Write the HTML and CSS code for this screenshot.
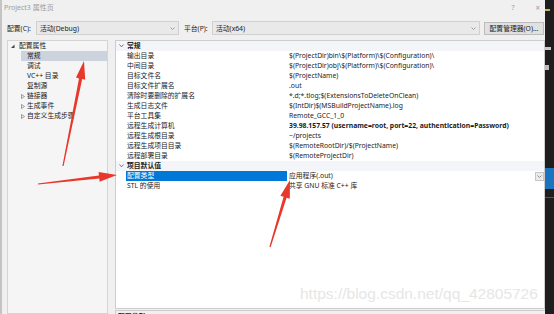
FILE: index.html
```html
<!DOCTYPE html>
<html lang="zh-CN">
<head>
  <meta charset="UTF-8">
  <title>Project3 属性页</title>
  <link rel="stylesheet" href="styles.css">
</head>
<body>
  <div class="screen">
    <!-- 属性页窗口 -->
    <div class="window">
      <div class="titlebar">
        <span class="title">Project3 属性页</span>
        <span class="tb-help">?</span>
        <span class="tb-close">×</span>
      </div>

      <div class="toolbar">
        <span class="label label-config">配置(C):</span>
        <div class="combo combo-config">
          <span>活动(Debug)</span>
          <svg class="chev" width="5" height="3" viewBox="0 0 5 3"><path d="M0.5 0.5 L2.5 2.5 L4.5 0.5" fill="none" stroke="#888" stroke-width="0.8"/></svg>
        </div>
        <span class="label label-platform">平台(P):</span>
        <div class="combo combo-platform">
          <span>活动(x64)</span>
          <svg class="chev" width="5" height="3" viewBox="0 0 5 3"><path d="M0.5 0.5 L2.5 2.5 L4.5 0.5" fill="none" stroke="#888" stroke-width="0.8"/></svg>
        </div>
        <button class="btn">配置管理器(O)...</button>
      </div>

      <div class="main">
        <ul class="tree">
          <li class="root">
            <svg class="tw" width="8" height="4" viewBox="0 0 8 4"><polygon points="4,4 4,0.5 0.5,4" transform="translate(0.5,0)" fill="#444"/></svg>
            配置属性
          </li>
          <li class="child selected">常规</li>
          <li class="child">调试</li>
          <li class="child">VC++ 目录</li>
          <li class="child">复制源</li>
          <li class="child expander">
            <svg class="tw" width="6" height="5" viewBox="0 0 6 5"><polygon points="0.5,0.5 3.5,2.5 0.5,4.5" fill="none" stroke="#777" stroke-width="0.7"/></svg>
            链接器
          </li>
          <li class="child expander">
            <svg class="tw" width="6" height="5" viewBox="0 0 6 5"><polygon points="0.5,0.5 3.5,2.5 0.5,4.5" fill="none" stroke="#777" stroke-width="0.7"/></svg>
            生成事件
          </li>
          <li class="child expander">
            <svg class="tw" width="6" height="5" viewBox="0 0 6 5"><polygon points="0.5,0.5 3.5,2.5 0.5,4.5" fill="none" stroke="#777" stroke-width="0.7"/></svg>
            自定义生成步骤
          </li>
        </ul>

        <div class="right">
          <div class="grid">
            <div class="row group">
              <svg class="gchev" width="8" height="4" viewBox="0 0 8 4"><path d="M0.5 0.5 L2.5 2.8 L4.5 0.5" fill="none" stroke="#555" stroke-width="0.8"/></svg>
              <span>常规</span>
            </div>
            <div class="row"><span class="name">输出目录</span><span class="value">$(ProjectDir)bin\$(Platform)\$(Configuration)\</span></div>
            <div class="row"><span class="name">中间目录</span><span class="value">$(ProjectDir)obj\$(Platform)\$(Configuration)\</span></div>
            <div class="row"><span class="name">目标文件名</span><span class="value">$(ProjectName)</span></div>
            <div class="row"><span class="name">目标文件扩展名</span><span class="value">.out</span></div>
            <div class="row"><span class="name">清除时要删除的扩展名</span><span class="value">*.d;*.tlog;$(ExtensionsToDeleteOnClean)</span></div>
            <div class="row"><span class="name">生成日志文件</span><span class="value">$(IntDir)$(MSBuildProjectName).log</span></div>
            <div class="row"><span class="name">平台工具集</span><span class="value">Remote_GCC_1_0</span></div>
            <div class="row"><span class="name">远程生成计算机</span><span class="value strong">39.98.157.57 (username=root, port=22, authentication=Password)</span></div>
            <div class="row"><span class="name">远程生成根目录</span><span class="value">~/projects</span></div>
            <div class="row"><span class="name">远程生成项目目录</span><span class="value">$(RemoteRootDir)/$(ProjectName)</span></div>
            <div class="row"><span class="name">远程部署目录</span><span class="value">$(RemoteProjectDir)</span></div>
            <div class="row group">
              <svg class="gchev" width="8" height="4" viewBox="0 0 8 4"><path d="M0.5 0.5 L2.5 2.8 L4.5 0.5" fill="none" stroke="#555" stroke-width="0.8"/></svg>
              <span>项目默认值</span>
            </div>
            <div class="row current">
              <span class="name">配置类型</span>
              <span class="value">应用程序(.out)
                <span class="dd"><svg width="5" height="3" viewBox="0 0 5 3"><path d="M0.5 0.5 L2.5 2.5 L4.5 0.5" fill="none" stroke="#777" stroke-width="0.8"/></svg></span>
              </span>
            </div>
            <div class="row"><span class="name">STL 的使用</span><span class="value">共享 GNU 标准 C++ 库</span></div>
          </div>
          <div class="desc">配置类型</div>
        </div>
      </div>
    </div>

    <!-- 右侧露出的编辑器一角 -->
    <div class="strip">
      <span class="mark m-yellow"></span>
      <span class="mark m-white"></span>
      <span class="mark m-white2"></span>
      <span class="mark m-blue"></span>
      <span class="mark m-gray"></span>
    </div>

    <div class="watermark">https://blog.csdn.net/qq_42805726</div>

    <!-- 标注箭头 -->
    <svg class="arrows" width="554" height="314" viewBox="0 0 554 314">
      <polygon fill="#e8382c" points="63.6,166.1 82.2,79.0 85.2,79.8 84,61 76,77.6 79.0,78.4 62.4,165.9"/>
      <polygon fill="#e8382c" points="38.1,184.6 99.3,178.6 99.6,181.8 117,175 98.6,172.1 98.9,175.4 37.9,183.4"/>
      <polygon fill="#e8382c" points="270.6,247.2 286.6,197.8 289.8,198.8 290,180 280.4,195.8 283.6,196.8 269.4,246.8"/>
    </svg>
  </div>
</body>
</html>
```

FILE: styles.css
```css
body {
  margin: 0;
  font-family: "Noto Sans", "Noto Sans CJK SC", sans-serif;
  font-size: 6.8px;
  color: #1b1b1b;
  background: #f0f0f0;
}
.screen {
  position: relative;
  display: flex;
  width: 554px;
  height: 314px;
  overflow: hidden;
}
/* 窗口 */
.window {
  width: 545px;
  height: 314px;
  box-sizing: border-box;
  border-left: 2px solid #c4c4c4;
  padding-left: 5px;
  display: flex;
  flex-direction: column;
  background: #f0f0f0;
}
.titlebar {
  height: 14px;
  display: flex;
  align-items: center;
  margin-left: -3px;
  color: #9c9c9c;
  font-size: 7px;
}
.tb-help {
  margin-left: auto;
}
.tb-close {
  margin-left: 21px;
  margin-right: 5px;
  font-size: 8px;
}
/* 配置 / 平台 一行 */
.toolbar {
  display: flex;
  align-items: center;
  height: 14px;
  margin-top: 7px;
  margin-bottom: 5px;
}
.label-config {
  width: 29px;
}
.label-platform {
  width: 28px;
  margin-left: 5px;
}
.combo {
  height: 14px;
  box-sizing: border-box;
  border: 1px solid #d0d0d0;
  background: #e9e9e9;
  display: flex;
  align-items: center;
  padding-left: 3px;
}
.combo-config {
  width: 143px;
}
.combo-platform {
  width: 268px;
}
.chev {
  margin-left: auto;
  margin-right: 3px;
}
.btn {
  margin-left: 4px;
  width: 60px;
  height: 13px;
  padding: 0;
  font-family: inherit;
  font-size: 6.8px;
  color: #1b1b1b;
  background: #e1e1e1;
  border: 1px solid #bcbcbc;
}
/* 下方两栏 */
.main {
  display: flex;
  gap: 7px;
  flex: 1;
  min-height: 0;
}
.tree {
  width: 101px;
  box-sizing: border-box;
  margin: 0;
  padding: 0;
  list-style: none;
  border: 1px solid #d4d4d4;
  background: #f5f5f5;
}
.tree li {
  height: 10px;
  line-height: 10px;
  display: flex;
  align-items: center;
  white-space: nowrap;
}
.tree .root {
  padding-left: 2px;
}
.tree .root .tw {
  margin-right: 1px;
}
.tree .child {
  margin-left: 13px;
  padding-left: 6px;
}
.tree .expander {
  padding-left: 0;
}
.tree .selected {
  background: #cdd3dc;
}
.right {
  flex: 1;
  display: flex;
  flex-direction: column;
  min-height: 0;
}
/* 属性表格 */
.grid {
  height: 269px;
  flex-shrink: 0;
  box-sizing: border-box;
  border: 1px solid #cdcdcd;
  background: #fff;
}
.row {
  display: flex;
  height: 10px;
  line-height: 10px;
  white-space: nowrap;
}
.row.group {
  background: #f3f5f9;
  font-weight: bold;
  align-items: center;
}
.gchev {
  margin-left: 3px;
}
.name {
  margin-left: 10px;
  width: 161px;
  padding-left: 1px;
  box-sizing: border-box;
}
.value {
  flex: 1;
  display: flex;
  align-items: center;
  padding-left: 2px;
}
.value.strong {
  font-weight: bold;
}
.row.current .name {
  background: #0078d7;
  color: #fff;
}
.dd {
  margin-left: auto;
  width: 9px;
  height: 9px;
  box-sizing: border-box;
  border: 1px solid #c6c6c6;
  background: #ececec;
  display: flex;
  align-items: center;
  justify-content: center;
}
.desc {
  margin-top: 1px;
  border-top: 1px solid #cdcdcd;
  border-left: 1px solid #cdcdcd;
  padding: 1px 2px;
  font-weight: bold;
  line-height: 10px;
}
/* 右侧编辑器一角 */
.strip {
  width: 9px;
  height: 314px;
  background: #1e1e1e;
  display: flex;
  flex-direction: column;
}
.mark {
  display: block;
}
.m-yellow {
  margin-top: 9px;
  width: 5px;
  height: 2px;
  background: #c9b458;
}
.m-white {
  margin-top: 36px;
  width: 6px;
  height: 3px;
  background: #c8c8c8;
}
.m-white2 {
  margin-top: 15px;
  width: 4px;
  height: 5px;
  background: #bdbdbd;
}
.m-blue {
  margin-top: 98px;
  width: 9px;
  height: 21px;
  background: #1a74c0;
}
.m-gray {
  margin-top: 8px;
  width: 9px;
  height: 1px;
  background: #555;
}
.watermark {
  position: absolute;
  left: 300px;
  top: 285px;
  font-family: "Liberation Sans", Arial, sans-serif;
  font-size: 15.5px;
  color: #e6e6e6;
  white-space: nowrap;
}
.arrows {
  position: absolute;
  left: 0;
  top: 0;
}
```
